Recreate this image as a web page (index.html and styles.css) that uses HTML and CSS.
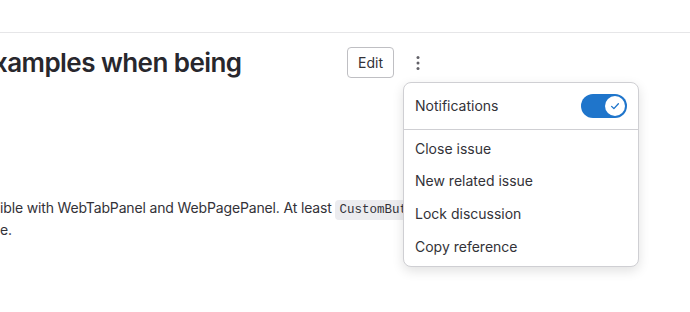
FILE: index.html
```html
<!DOCTYPE html>
<html lang="en">
<head>
    <meta charset="UTF-8">
    <meta name="viewport" content="width=device-width, initial-scale=1.0">
    <title>Issue</title>
    <link rel="stylesheet" href="styles.css">
</head>
<body>
    <div class="topbar"></div>

    <div class="page">
        <div class="issue-header">
            <h1 class="issue-title">xamples when being</h1>
            <div class="issue-actions">
                <button class="btn-edit">Edit</button>
                <div class="more-wrap">
                    <button class="btn-more" aria-label="More actions">
                        <svg width="16" height="16" viewBox="0 0 16 16">
                            <circle cx="8" cy="2.5" r="1.5" fill="#626168"/>
                            <circle cx="8" cy="8" r="1.5" fill="#626168"/>
                            <circle cx="8" cy="13.5" r="1.5" fill="#626168"/>
                        </svg>
                    </button>

                    <div class="dropdown">
                        <div class="dropdown-toggle-row">
                            <span>Notifications</span>
                            <span class="toggle">
                                <span class="knob">
                                    <svg width="12" height="12" viewBox="0 0 16 16">
                                        <path d="M3.5 8.5l3 3 6-6.5" fill="none" stroke="#1f75cb" stroke-width="1.8" stroke-linecap="round" stroke-linejoin="round"/>
                                    </svg>
                                </span>
                            </span>
                        </div>
                        <ul class="dropdown-list">
                            <li>Close issue</li>
                            <li>New related issue</li>
                            <li>Lock discussion</li>
                            <li>Copy reference</li>
                        </ul>
                    </div>
                </div>
            </div>
        </div>

        <div class="description">
            <p>ible with WebTabPanel and WebPagePanel. At least <code>CustomButton</code> should be available in the</p>
            <p>e.</p>
        </div>
    </div>
</body>
</html>
```

FILE: styles.css
```css
body {
    font-family: Inter, "Noto Sans", sans-serif;
    margin: 0;
    padding: 0;
    background-color: #fff;
    color: #333238;
    overflow: hidden;
    width: 690px;
    height: 312px;
}

.topbar {
    height: 32px;
    border-bottom: 1px solid #e6e6e8;
}

.page {
    padding-top: 12px;
    margin-left: -7px;
}

.issue-header {
    display: flex;
    align-items: center;
    width: 441px;
    justify-content: space-between;
}

.issue-title {
    margin: 0;
    font-size: 26px;
    line-height: 35px;
    font-weight: 600;
    color: #28272d;
    letter-spacing: -0.55px;
    white-space: nowrap;
}

.issue-actions {
    display: flex;
    align-items: center;
    gap: 8px;
}

.btn-edit {
    height: 31px;
    width: 47px;
    padding: 0;
    background: #fff;
    border: 1px solid #bfbfc3;
    border-radius: 4px;
    font-family: inherit;
    font-size: 14px;
    color: #333238;
}

.more-wrap {
    position: relative;
}

.btn-more {
    width: 32px;
    height: 32px;
    padding: 0;
    border: none;
    background: none;
    display: flex;
    align-items: center;
    justify-content: center;
}

.dropdown {
    position: absolute;
    top: calc(100% + 3px);
    left: 1px;
    width: 234px;
    background: #fff;
    border: 1px solid #cfcfd3;
    border-radius: 8px;
    box-shadow: 0 4px 12px rgba(5, 5, 6, 0.12);
    z-index: 10;
}

.dropdown-toggle-row {
    display: flex;
    align-items: center;
    justify-content: space-between;
    height: 46px;
    padding: 0 11px;
    font-size: 14px;
    border-bottom: 1px solid #cfcfd3;
}

.toggle {
    width: 46px;
    height: 24px;
    border-radius: 12px;
    background: #1f75cb;
    display: flex;
    align-items: center;
    justify-content: flex-end;
    padding-right: 2px;
    box-sizing: border-box;
}

.knob {
    width: 20px;
    height: 20px;
    border-radius: 50%;
    background: #fff;
    display: flex;
    align-items: center;
    justify-content: center;
}

.dropdown-list {
    list-style: none;
    margin: 0;
    padding: 3px 0 2px;
}

.dropdown-list li {
    height: 32.8px;
    line-height: 32.8px;
    padding: 0 11px;
    font-size: 14px;
    color: #333238;
}

.description {
    margin-top: 118px;
    margin-left: 7px;
    font-size: 14px;
    line-height: 19px;
    letter-spacing: -0.15px;
}

.description p {
    margin: 0;
    white-space: nowrap;
}

code {
    font-family: "Liberation Mono", "DejaVu Sans Mono", monospace;
    font-size: 12.5px;
    letter-spacing: 0;
    background: #ececef;
    border-radius: 4px;
    padding: 3px 4px;
}
```
